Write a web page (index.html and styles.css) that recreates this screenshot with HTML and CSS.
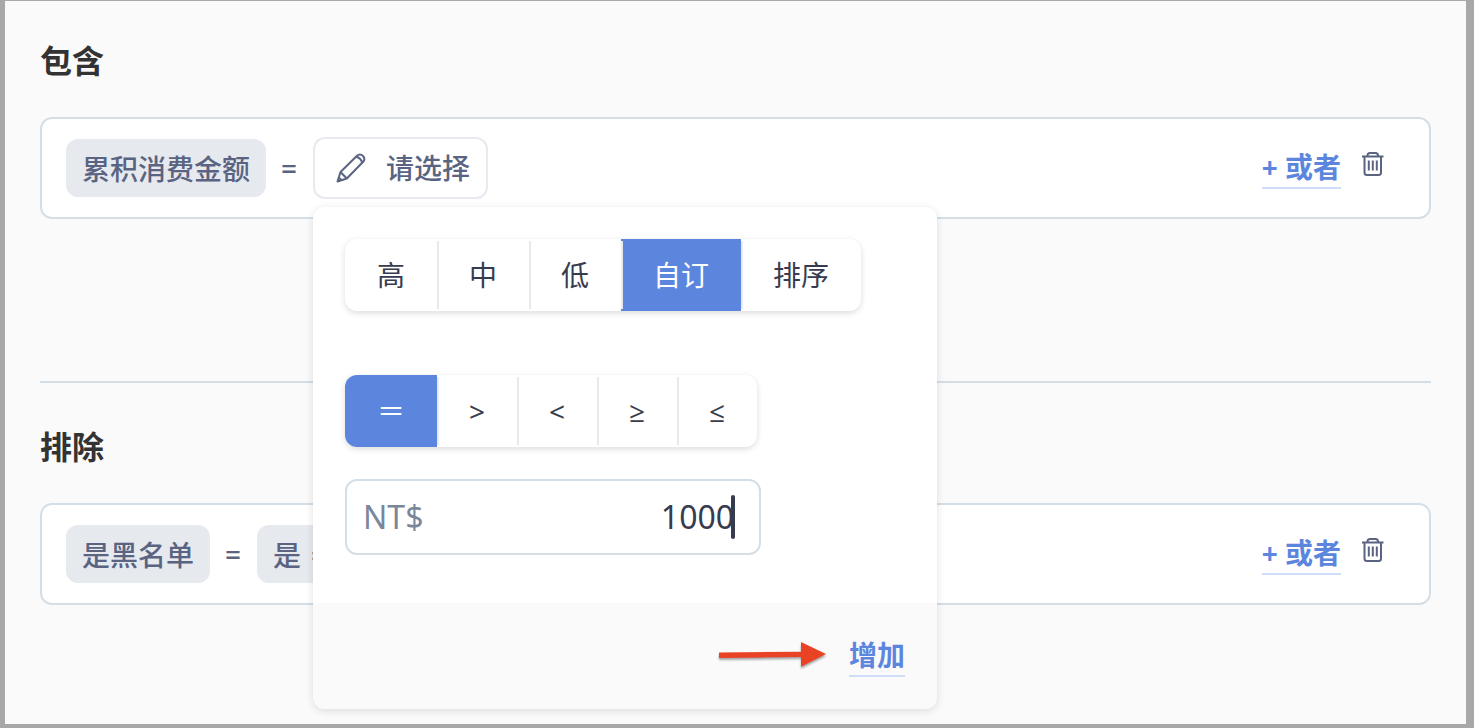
FILE: index.html
```html
<!DOCTYPE html>
<html lang="zh-CN">
<head>
    <meta charset="UTF-8">
    <meta name="viewport" content="width=device-width, initial-scale=1.0">
    <title>筛选条件</title>
    <link rel="stylesheet" href="styles.css">
</head>
<body>
    <main class="page">
        <section class="group">
            <h2>包含</h2>
            <div class="condition">
                <span class="tag">累积消费金额</span>
                <span class="equals">=</span>
                <div class="picker">
                    <button type="button" class="picker-button" aria-expanded="true">
                        <svg class="pencil" viewBox="0 0 30 30" aria-hidden="true">
                            <path d="M1.5 28.5 4.5 19 21 2.8q3-2.6 6 .2 2.6 2.8.2 5.8L10.8 25.5zM4.5 19l6.300 6.500M20 3.800q5 1 6.200 6.200M2.800 24.500l2.700 2.700"/>
                        </svg>
                        请选择
                    </button>
                    <div class="popover">
                        <div class="popover-body">
                            <div class="segments levels">
                                <button type="button">高</button>
                                <button type="button">中</button>
                                <button type="button">低</button>
                                <button type="button" class="active">自订</button>
                                <button type="button">排序</button>
                            </div>
                            <div class="segments">
                                <button type="button" class="active">＝</button>
                                <button type="button">&gt;</button>
                                <button type="button">&lt;</button>
                                <button type="button">≥</button>
                                <button type="button">≤</button>
                            </div>
                            <div class="amount">
                                <label for="amount">NT$</label>
                                <input type="text" id="amount" inputmode="numeric" value="1000">
                                <span class="caret"></span>
                            </div>
                        </div>
                        <div class="popover-footer">
                            <svg class="arrow" viewBox="0 0 112 32" aria-hidden="true">
                                <path d="M2 12.500 84 11.700V2l25 12-25 12.700V17L2 18z"/>
                            </svg>
                            <a href="#" class="link">增加</a>
                        </div>
                    </div>
                </div>
                <div class="actions">
                    <a href="#" class="link">+ 或者</a>
                    <button type="button" class="delete" aria-label="删除">
                        <svg viewBox="0 0 24 26" aria-hidden="true">
                            <path d="M1 5.500h21.500M6.500 5.500V4.500Q6.500 2 9 2h5.500Q17 2 17 4.500v1M3.500 5.500V21.500q0 2.500 2.500 2.500h11.500q2.500 0 2.500-2.500V5.500M7.800 9.500v10M11.800 9.500v10M15.800 9.500v10"/>
                        </svg>
                    </button>
                </div>
            </div>
        </section>

        <section class="group">
            <h2>排除</h2>
            <div class="condition">
                <span class="tag">是黑名单</span>
                <span class="equals">=</span>
                <span class="tag"><span>是</span><span>=</span><span>是</span></span>
                <div class="actions">
                    <a href="#" class="link">+ 或者</a>
                    <button type="button" class="delete" aria-label="删除">
                        <svg viewBox="0 0 24 26" aria-hidden="true">
                            <path d="M1 5.500h21.500M6.500 5.500V4.500Q6.500 2 9 2h5.500Q17 2 17 4.500v1M3.500 5.500V21.500q0 2.500 2.500 2.500h11.500q2.500 0 2.500-2.500V5.500M7.800 9.500v10M11.800 9.500v10M15.800 9.500v10"/>
                        </svg>
                    </button>
                </div>
            </div>
        </section>
    </main>
</body>
</html>
```

FILE: styles.css
```css
* {
    box-sizing: border-box;
}

body {
    margin: 0;
    font-family: "Noto Sans", "Open Sans", "Noto Sans CJK SC", sans-serif;
    font-size: 28px;
    line-height: 40px;
    color: #363c4e;
    background-color: #fafafa;
}

button,
input {
    font: inherit;
    color: inherit;
    background: none;
    border: none;
    padding: 0;
    margin: 0;
}

button {
    cursor: pointer;
}

/* 灰色外框 */
.page {
    min-height: 100vh;
    padding: 40px 35px 0;
    border: solid #a8a8a8;
    border-width: 1px 8px 4px 5px;
}

h2 {
    margin: 0 0 36px;
    font-size: 32px;
    font-weight: 700;
    line-height: 40px;
    color: #333333;
}

.group + .group {
    margin-top: 162px;
    padding-top: 44px;
    border-top: 2px solid #d4dee7;
}

.condition {
    display: flex;
    align-items: center;
    min-height: 102px;
    padding: 18px 44px 18px 24px;
    background-color: #ffffff;
    border: 2px solid #d4dee7;
    border-radius: 12px;
    color: #5a6482;
}

.tag {
    display: flex;
    gap: 10px;
    padding: 10px 16px 8px;
    background-color: #e6e9ee;
    border-radius: 12px;
    font-weight: 500;
}

.equals {
    margin: 0 16px 0 15px;
    font-weight: 500;
}

.picker {
    position: relative;
}

.picker-button {
    display: flex;
    align-items: center;
    gap: 20px;
    height: 62px;
    padding: 0 16px 0 21px;
    border: 2px solid #e7eaf0;
    border-radius: 12px;
    font-weight: 500;
}

.pencil {
    width: 30px;
    height: 30px;
    fill: none;
    stroke: #5a6482;
    stroke-width: 2;
    stroke-linejoin: round;
}

/* 按钮下方展开的面板 */
.popover {
    position: absolute;
    top: 70px;
    left: 0;
    width: 624px;
    background-color: #ffffff;
    border-radius: 12px;
    box-shadow: 0 2px 8px rgba(0, 0, 0, 0.12);
    color: #363c4e;
    overflow: hidden;
    z-index: 1;
}

.popover-body {
    padding: 32px 32px 48px;
}

.segments {
    display: flex;
    width: fit-content;
    margin-bottom: 32px;
    border-radius: 12px;
    box-shadow: 0 2px 6px rgba(0, 0, 0, 0.14);
    overflow: hidden;
}

.levels {
    margin-bottom: 64px;
}

.segments button {
    position: relative;
    height: 72px;
    padding: 0 32px;
}

.segments button + button::before {
    content: "";
    position: absolute;
    top: 2px;
    bottom: 2px;
    left: 0;
    width: 2px;
    background-color: #e6e9ee;
}

.segments .active {
    background-color: #5c86de;
    color: #ffffff;
}

.amount {
    position: relative;
    display: flex;
    align-items: center;
    width: 416px;
    height: 76px;
    padding: 0 25px 0 16px;
    border: 2px solid #d4dee7;
    border-radius: 12px;
    font-size: 32px;
}

.amount label {
    color: #7c869b;
}

.amount input {
    flex: 1;
    min-width: 0;
    text-align: right;
    outline: none;
}

.caret {
    position: absolute;
    top: 14px;
    right: 24px;
    width: 4px;
    height: 44px;
    border-radius: 2px;
    background-color: #363c4e;
}

.popover-footer {
    display: flex;
    align-items: center;
    justify-content: flex-end;
    gap: 20px;
    padding: 32px;
    background-color: #fafafa;
}

.arrow {
    width: 112px;
    height: 32px;
    fill: #e94225;
    filter: drop-shadow(0 2px 1px rgba(0, 0, 0, 0.35));
}

.link {
    border-bottom: 2px solid #d0ddf9;
    font-weight: 700;
    color: #5c86de;
    text-decoration: none;
}

.actions {
    display: flex;
    align-items: center;
    gap: 20px;
    margin-left: auto;
}

.delete {
    padding-bottom: 8px;
}

.delete svg {
    display: block;
    width: 24px;
    height: 26px;
    fill: none;
    stroke: #5a6482;
    stroke-width: 2;
}
```
